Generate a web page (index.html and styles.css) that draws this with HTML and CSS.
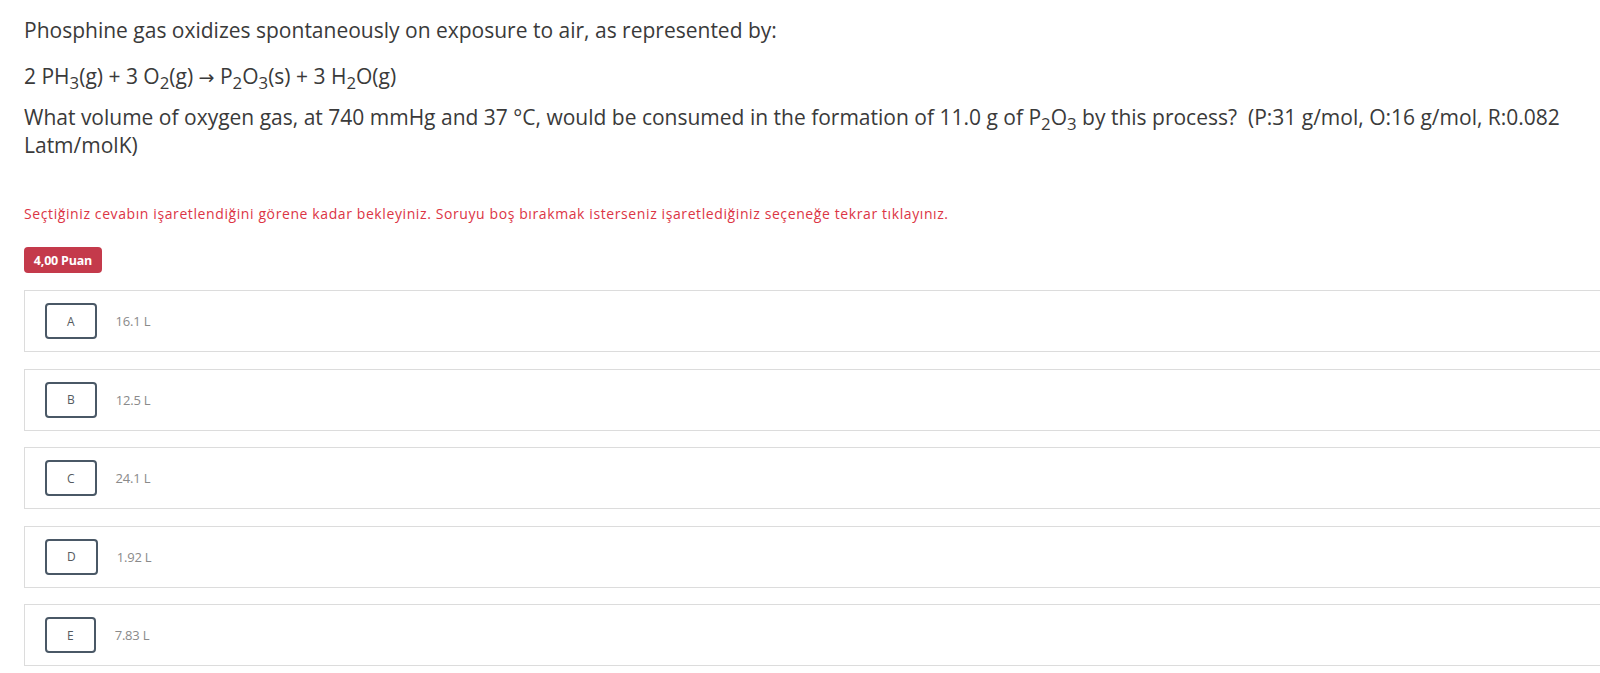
FILE: index.html
```html
<!DOCTYPE html>
<html lang="tr">
<head>
<meta charset="utf-8">
<title>Soru</title>
<link rel="stylesheet" href="styles.css">
</head>
<body>
<div class="page">
  <div class="question">
    <p class="q-line q-first">Phosphine gas oxidizes spontaneously on exposure to air, as represented by:</p>
    <p class="q-line q-second">2 PH<sub>3</sub>(g) + 3 O<sub>2</sub>(g) <span class="arrow">→</span> P<sub>2</sub>O<sub>3</sub>(s) + 3 H<sub>2</sub>O(g)</p>
    <p class="q-line q-third">What volume of oxygen gas, at 740 mmHg and 37 °C, would be consumed in the formation of 11.0 g of P<sub>2</sub>O<sub>3</sub> by this process?&nbsp; (P:31 g/mol, O:16 g/mol, R:0.082 Latm/molK)</p>
  </div>
  <p class="warning">Seçtiğiniz cevabın işaretlendiğini görene kadar bekleyiniz. Soruyu boş bırakmak isterseniz işaretlediğiniz seçeneğe tekrar tıklayınız.</p>
  <div class="badge-row"><span class="badge">4,00 Puan</span></div>
  <div class="options">
    <div class="option"><span class="letter">A</span><span class="answer">16.1 L</span></div>
    <div class="option"><span class="letter">B</span><span class="answer">12.5 L</span></div>
    <div class="option"><span class="letter">C</span><span class="answer">24.1 L</span></div>
    <div class="option"><span class="letter">D</span><span class="answer">1.92 L</span></div>
    <div class="option"><span class="letter">E</span><span class="answer">7.83 L</span></div>
  </div>
</div>
</body>
</html>
```
FILE: styles.css
```css
html, body {
  margin: 0;
  padding: 0;
  background: #ffffff;
  overflow: hidden;
}
.page {
  padding: 16px 0 0 24px;
  width: 1620px;
}
.question {
  font-family: "Open Sans", "Liberation Sans", sans-serif;
  font-size: 21px;
  color: #3a3a3a;
  width: 1550px;
}
.q-line {
  margin: 0;
  line-height: 28px;
}
.q-line sub {
  font-size: 0.8em;
  vertical-align: -0.3em;
  line-height: 0;
}
.arrow {
  font-family: "DejaVu Sans", sans-serif;
  font-size: 19px;
}
.q-first { margin-bottom: 18px; }
.q-second { margin-bottom: 12px; }
.warning {
  margin: 45px 0 0 0;
  font-family: "Open Sans", "Noto Sans", sans-serif;
  font-size: 14px;
  letter-spacing: 0.6px;
  line-height: 20px;
  color: #dc3545;
}
.badge-row {
  margin-top: 23px;
  display: flex;
}
.badge {
  display: inline-flex;
  align-items: center;
  justify-content: center;
  height: 26px;
  width: 78px;
  box-sizing: border-box;
  background: #c43a4b;
  color: #ffffff;
  border-radius: 4px;
  font-family: "Open Sans", "Noto Sans", sans-serif;
  font-weight: 700;
  font-size: 12.5px;
  letter-spacing: -0.2px;
}
.options {
  margin-top: 17px;
  display: flex;
  flex-direction: column;
  gap: 16.5px;
}
.option {
  display: flex;
  align-items: center;
  height: 62px;
  box-sizing: border-box;
  border: 1px solid #dcdcdc;
  padding-left: 20px;
  gap: 19px;
}
.letter {
  display: inline-flex;
  align-items: center;
  justify-content: center;
  height: 36px;
  box-sizing: border-box;
  padding: 0 20px;
  border: 2px solid #4a5866;
  border-radius: 4px;
  font-family: "Open Sans", "Noto Sans", sans-serif;
  font-size: 12px;
  color: #555a60;
}
.answer {
  font-family: "Open Sans", "Noto Sans", sans-serif;
  font-size: 13px;
  color: #8a8a8a;
  letter-spacing: -0.2px;
}
```
